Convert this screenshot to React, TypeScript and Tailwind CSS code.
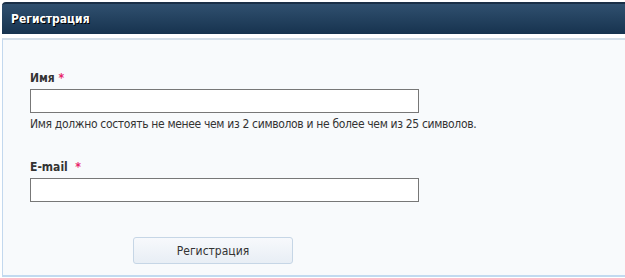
export default function App() {
  const font = { fontFamily: "Tahoma, 'DejaVu Sans Condensed', 'DejaVu Sans', sans-serif" }

  return (
    <div className="w-[625px] h-[278px] bg-white overflow-hidden pl-[2px] pt-[2px]" style={font}>
      <div className="h-[32px] w-[630px] rounded-tl-[4px] border-t-2 border-[#1a2f47] bg-gradient-to-b from-[#30506f] to-[#17334f] flex items-center pl-[9px]">
        <span className="text-[12px] font-bold text-white [text-shadow:1px_1px_0_#000]">Регистрация</span>
      </div>
      <div className="mt-[4px] h-[239px] w-[630px] border-t-2 border-t-[#d3dee8] border-l border-l-[#c3d8ee] border-b-2 border-b-[#c2daf0] bg-[#f8fafc] pl-[27px] pt-[31px]">
        <div className="flex flex-col">
          <label className="text-[12px] font-bold text-[#333] leading-[15px]">
            Имя <span className="text-[#e8246a]">*</span>
          </label>
          <input className="mt-[3px] h-[24px] w-[389px] border border-[#777] bg-white outline-none" />
          <p className="mt-[4px] text-[12px] tracking-[-0.33px] text-[#333] leading-[15px]">
            Имя должно состоять не менее чем из 2 символов и не более чем из 25 символов.
          </p>
          <label className="mt-[28px] text-[12px] font-bold text-[#333] leading-[15px]">
            E-mail&nbsp; <span className="text-[#e8246a]">*</span>
          </label>
          <input className="mt-[3px] h-[24px] w-[389px] border border-[#777] bg-white outline-none" />
          <button className="ml-[103px] mt-[35px] h-[27px] w-[160px] rounded-[3px] border border-[#c6d6e6] bg-gradient-to-b from-[#f7f9fc] to-[#e8eef5] text-[12px] text-[#333]">
            Регистрация
          </button>
        </div>
      </div>
    </div>
  )
}
